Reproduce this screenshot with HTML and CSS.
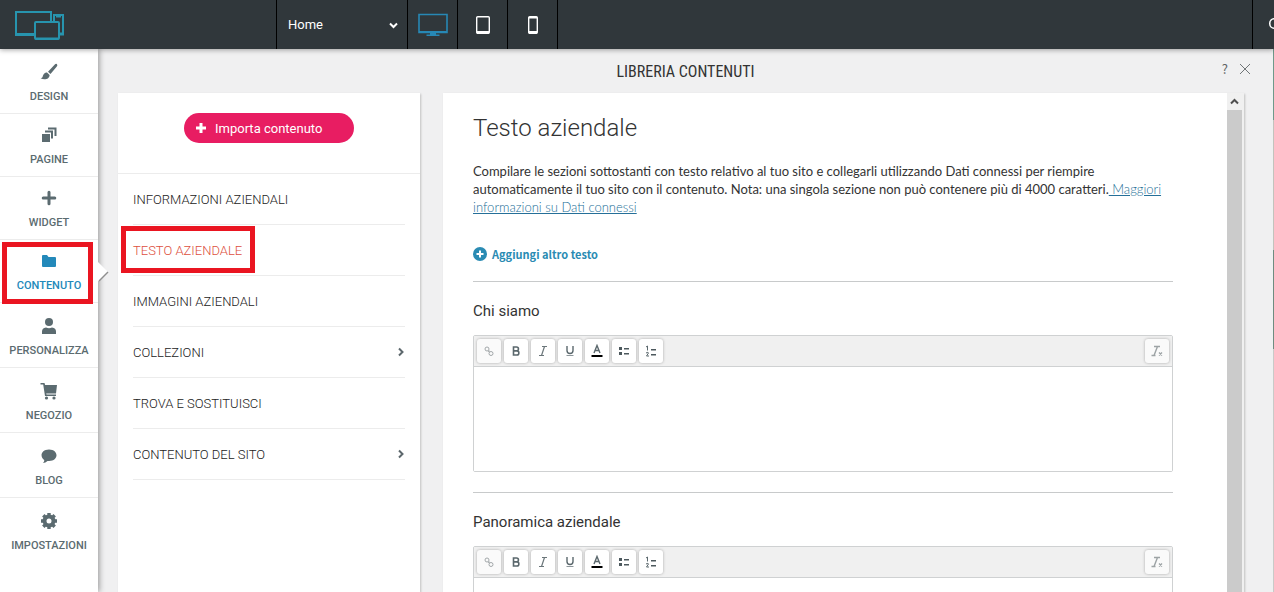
FILE: index.html
```html
<!DOCTYPE html>
<html lang="it">
<head>
<meta charset="utf-8">
<title>Libreria contenuti</title>
<link rel="stylesheet" href="styles.css">
</head>
<body>
<svg class="defs" aria-hidden="true">
  <symbol id="chain" viewBox="0 0 12 12"><g fill="none" stroke="#a3a8aa" stroke-width="1"><circle cx="4" cy="4" r="2"/><circle cx="8" cy="8.500" r="2"/><path d="M5 6.500l2-.5"/></g></symbol>
  <symbol id="bold" viewBox="0 0 12 12"><path d="M3.500 2h3a1.900 1.900 0 0 1 0 3.900h-3zM3.500 5.900h3.300a2 2 0 0 1 0 4.100H3.500z" fill="none" stroke="#5b686d" stroke-width="1.600"/></symbol>
  <symbol id="italic" viewBox="0 0 12 12"><path d="M5 1.500h5M2 10.500h5M7.500 1.500l-3 9" fill="none" stroke="#6b767a" stroke-width="1.200"/></symbol>
  <symbol id="under" viewBox="0 0 12 12"><path d="M3 1v4.500a3 3 0 0 0 6 0V1" fill="none" stroke="#5b686d" stroke-width="1.400"/><path d="M2.500 10.500h7" stroke="#8d969a"/></symbol>
  <symbol id="color" viewBox="0 0 12 14"><path d="M3 9l3-7.500L9 9M4 6.500h4" fill="none" stroke="#5b686d" stroke-width="1.400"/><path d="M.5 12h11" stroke="#000" stroke-width="2"/></symbol>
  <symbol id="bullets" viewBox="0 0 12 12"><path d="M1 2h3v3H1zM1 7h3v3H1zM6 3h5v1.500H6zM6 8h5v1.500H6z" fill="#4c585d"/></symbol>
  <symbol id="numbers" viewBox="0 0 12 12"><path d="M1 2l1.500-1v4.500M1 8q2.500-1.500 2.500 0L1.500 11h2.500" fill="none" stroke="#5b686d"/><path d="M6 4h5v1.500H6zM6 9h5v1.500H6z" fill="#4c585d"/></symbol>
  <symbol id="clear" viewBox="0 0 14 12"><path d="M4 1.500h6M1.500 10.500h4M7.500 1.500l-3.500 9" fill="none" stroke="#9da3a5" stroke-width="1.400"/><path d="M9 7.500l3 3M12 7.500l-3 3" stroke="#9da3a5" stroke-width="1.300"/></symbol>
  <symbol id="next" viewBox="0 0 8 10"><path d="M2 1.500l3.500 3.500L2 8.500" fill="none" stroke="#5c676c" stroke-width="2"/></symbol>
</svg>

<header class="topbar">
  <a class="logo" href="#" aria-label="Pannello">
    <svg width="52" height="32" viewBox="0 0 52 32" fill="none" stroke="#2794ae" stroke-width="2">
      <path d="M20 25H2V3h35v10"/><path d="M1 25.500h19" stroke-width="3"/>
      <path d="M40 13V6h9v19h-4"/><path d="M42 7.500h5" stroke-width="2"/><path d="M45 25h5" stroke-width="3"/>
      <rect x="21" y="13" width="24" height="17" rx="1"/><path d="M21 29.500h24"/>
    </svg>
  </a>
  <div class="page-pick">
    <select class="page-select" aria-label="Pagina"><option>Home</option></select>
    <svg class="page-arrow" width="9" height="7" viewBox="0 0 9 7"><path d="M1 1.500l3.500 3.500L8 1.500" fill="none" stroke="#fff" stroke-width="2"/></svg>
  </div>
  <button class="device" aria-label="Desktop"><svg width="30" height="24" viewBox="0 0 30 24"><path d="M1 1.500h28v18H1z" fill="none" stroke="#2788b5" stroke-width="1.600"/><path d="M1 18h28v2H1zM12 20h6v1.500h3.500V23h-13v-1.500H12z" fill="#2788b5"/></svg></button>
  <button class="device" aria-label="Tablet"><svg width="14" height="18" viewBox="0 0 14 18"><rect x=".7" y=".7" width="12.600" height="16.600" rx="1" fill="none" stroke="#fff" stroke-width="1.400"/><path d="M1 15h12v2.500H1z" fill="#fff"/></svg></button>
  <button class="device" aria-label="Telefono"><svg width="10" height="18" viewBox="0 0 10 18"><rect x=".7" y=".7" width="8.600" height="16.600" rx="1" fill="none" stroke="#fff" stroke-width="1.400"/><path d="M1 1h8v1.500H1zM1 15h8v2.500H1z" fill="#fff"/></svg></button>
  <button class="more" aria-label="Anteprima"><svg width="14" height="14" viewBox="0 0 14 14"><circle cx="7.500" cy="5.500" r="4.800" fill="none" stroke="#fff" stroke-width="1.500"/></svg></button>
</header>

<div class="workspace">
  <nav class="rail">
    <a class="rail-item" href="#"><svg width="18" height="18" viewBox="0 0 18 18"><path d="M16.800 1q1.200 1 0 2.500L10.500 11 8 8.700 14.800 1.500q1-1 2-.5zM7 9.600L9.600 12c0 4-5 5.500-9 3.300 2.400-.3 1.800-2 2.900-3.800C4.500 10 6 9.500 7 9.600z"/></svg>DESIGN</a>
    <a class="rail-item" href="#"><svg width="18" height="18" viewBox="0 0 18 18"><path d="M2 8h8v8H2zM5 4.500h8v8h-2V6.500H5zM8 1.500h8.500V10h-2V3.500H8z"/></svg>PAGINE</a>
    <a class="rail-item" href="#"><svg width="18" height="18" viewBox="0 0 18 18"><path d="M9 3.200v11.600M3.200 9h11.600" stroke="#5b6b70" stroke-width="3" stroke-linecap="round"/></svg>WIDGET</a>
    <a class="rail-item current" href="#"><svg width="18" height="18" viewBox="0 0 18 18"><path d="M3 3h4l1.500 2H15q1 0 1 1v8q0 1-1 1H3q-1 0-1-1V4q0-1 1-1z"/></svg>CONTENUTO<svg class="pointer" width="11" height="22" viewBox="0 0 11 22"><path d="M0 1l10 10-9 9H0z" fill="#fff"/><path d="M10 11l-9 9" stroke="#8f8f8f" stroke-width="1.500"/></svg></a>
    <a class="rail-item tall" href="#"><svg width="18" height="18" viewBox="0 0 18 18"><circle cx="9" cy="5" r="4"/><path d="M2 17v-2.500q0-3.500 4-4 3 1.500 6 0 4 .5 4 4V17z"/></svg>PERSONALIZZA</a>
    <a class="rail-item tall" href="#"><svg width="18" height="18" viewBox="0 0 18 18"><path d="M.5 1h4l.6 2H17l-1 8.500H6.200l.3 1H16V14H5L3.200 2.500H.5z"/><circle cx="6.500" cy="16" r="1.600"/><circle cx="14" cy="16" r="1.600"/></svg>NEGOZIO</a>
    <a class="rail-item tall" href="#"><svg width="18" height="18" viewBox="0 0 18 18"><path d="M9 2.500c10 0 10 11.500 0 11.500H7.500Q5.500 16 3 16q1.500-1.500 1.200-3C-.5 10 1 2.500 9 2.500z"/></svg>BLOG</a>
    <a class="rail-item tall last" href="#"><svg width="18" height="18" viewBox="0 0 18 18"><circle cx="9" cy="9" r="4.500" fill="none" stroke="#5b6b70" stroke-width="4"/><path d="M9 1v3M9 14v3M1 9h3M14 9h3M3.300 3.300l2 2M12.700 12.700l2 2M3.300 14.700l2-2M12.700 5.300l2-2" stroke="#5b6b70" stroke-width="3.400"/></svg>IMPOSTAZIONI</a>
  </nav>

  <main class="library">
    <div class="library-head">
      <h1 class="library-title">LIBRERIA CONTENUTI</h1>
      <div class="head-tools">
        <button class="head-btn" aria-label="Aiuto">?</button>
        <button class="head-btn" aria-label="Chiudi"><svg width="12" height="12" viewBox="0 0 12 12"><path d="M1 1l10 10M11 1L1 11" stroke="#707577"/></svg></button>
      </div>
    </div>
    <div class="panels">
      <aside class="menu-panel">
        <div class="import-box">
          <button class="import-btn"><svg width="10" height="10" viewBox="0 0 10 10"><path d="M5 0v10M0 5h10" stroke="#fff" stroke-width="3"/></svg>Importa contenuto</button>
        </div>
        <nav class="menu">
          <a class="menu-item" href="#">INFORMAZIONI AZIENDALI</a>
          <a class="menu-item chosen" href="#">TESTO AZIENDALE</a>
          <a class="menu-item" href="#">IMMAGINI AZIENDALI</a>
          <a class="menu-item" href="#">COLLEZIONI<svg width="8" height="10"><use href="#next"/></svg></a>
          <a class="menu-item" href="#">TROVA E SOSTITUISCI</a>
          <a class="menu-item" href="#">CONTENUTO DEL SITO<svg width="8" height="10"><use href="#next"/></svg></a>
        </nav>
      </aside>
      <section class="doc-panel">
        <div class="doc">
          <h2 class="doc-title">Testo aziendale</h2>
          <p class="intro">Compilare le sezioni sottostanti con testo relativo al tuo sito e collegarli utilizzando Dati connessi per riempire automaticamente il tuo sito con il contenuto. Nota: una singola sezione non può contenere più di 4000 caratteri.<a class="intro-link" href="#"> Maggiori informazioni su Dati connessi</a></p>
          <button class="add-btn"><svg width="14" height="14" viewBox="0 0 14 14"><circle cx="7" cy="7" r="7" fill="#2a8bb3"/><path d="M7 3.500v7M3.500 7h7" stroke="#fff" stroke-width="2"/></svg>Aggiungi altro testo</button>
          <div class="field">
            <label class="field-label" for="about">Chi siamo</label>
            <div class="editor">
              <div class="tools">
                <button class="tool dim" aria-label="Collegamento"><svg width="12" height="12"><use href="#chain"/></svg></button>
                <button class="tool" aria-label="Grassetto"><svg width="12" height="12"><use href="#bold"/></svg></button>
                <button class="tool" aria-label="Corsivo"><svg width="12" height="12"><use href="#italic"/></svg></button>
                <button class="tool" aria-label="Sottolineato"><svg width="12" height="12"><use href="#under"/></svg></button>
                <button class="tool" aria-label="Colore"><svg width="12" height="14"><use href="#color"/></svg></button>
                <button class="tool" aria-label="Elenco puntato"><svg width="12" height="12"><use href="#bullets"/></svg></button>
                <button class="tool" aria-label="Elenco numerato"><svg width="12" height="12"><use href="#numbers"/></svg></button>
                <button class="tool dim end" aria-label="Rimuovi formato"><svg width="14" height="12"><use href="#clear"/></svg></button>
              </div>
              <textarea class="editor-text" id="about"></textarea>
            </div>
          </div>
          <div class="field">
            <label class="field-label" for="overview">Panoramica aziendale</label>
            <div class="editor">
              <div class="tools">
                <button class="tool dim" aria-label="Collegamento"><svg width="12" height="12"><use href="#chain"/></svg></button>
                <button class="tool" aria-label="Grassetto"><svg width="12" height="12"><use href="#bold"/></svg></button>
                <button class="tool" aria-label="Corsivo"><svg width="12" height="12"><use href="#italic"/></svg></button>
                <button class="tool" aria-label="Sottolineato"><svg width="12" height="12"><use href="#under"/></svg></button>
                <button class="tool" aria-label="Colore"><svg width="12" height="14"><use href="#color"/></svg></button>
                <button class="tool" aria-label="Elenco puntato"><svg width="12" height="12"><use href="#bullets"/></svg></button>
                <button class="tool" aria-label="Elenco numerato"><svg width="12" height="12"><use href="#numbers"/></svg></button>
                <button class="tool dim end" aria-label="Rimuovi formato"><svg width="14" height="12"><use href="#clear"/></svg></button>
              </div>
              <textarea class="editor-text" id="overview"></textarea>
            </div>
          </div>
        </div>
        <div class="scroll">
          <button class="scroll-up" aria-label="Su"><svg width="9" height="7" viewBox="0 0 9 7"><path d="M1 5.500L4.500 2 8 5.500" fill="none" stroke="#4e4e4e" stroke-width="2"/></svg></button>
          <div class="scroll-thumb"></div>
        </div>
      </section>
    </div>
  </main>
  <div class="site-edge"></div>
</div>
</body>
</html>
```
FILE: styles.css
```css
*, *::before, *::after { box-sizing: border-box; }

body {
  margin: 0;
  height: 100vh;
  display: flex;
  flex-direction: column;
  overflow: hidden;
  font-family: Roboto, sans-serif;
  font-size: 13px;
  color: #333;
  background: #f0f0f1;
}

button {
  margin: 0;
  padding: 0;
  border: 0;
  background: none;
  font: inherit;
  color: inherit;
}

a { color: inherit; text-decoration: none; }

svg { display: block; flex: none; }

.defs { position: absolute; width: 0; height: 0; }

/* Top bar */
.topbar {
  flex: none;
  display: flex;
  height: 49px;
  background: #30373b;
  box-shadow: 0 1px 5px rgba(0, 0, 0, 0.35);
  position: relative;
  z-index: 3;
}

.logo {
  display: flex;
  align-items: center;
  width: 276px;
  padding-left: 14px;
}

.page-pick {
  position: relative;
  width: 131px;
  border-left: 1px solid #000;
}

.page-select {
  appearance: none;
  width: 100%;
  height: 100%;
  padding: 0 11px;
  border: 0;
  background: none;
  font: 13px Roboto, sans-serif;
  color: #fff;
}

.page-arrow {
  position: absolute;
  right: 9px;
  top: 22px;
  pointer-events: none;
}

.device {
  display: flex;
  align-items: center;
  justify-content: center;
  width: 50px;
  border-left: 1px solid #000;
}

.device:nth-of-type(3) {
  width: 51px;
  border-right: 1px solid #000;
}

.more {
  width: 22px;
  margin-left: auto;
  padding-left: 14px;
  border-left: 1px solid #000;
  overflow: hidden;
}

/* Left rail */
.workspace {
  flex: 1;
  display: flex;
  min-height: 0;
}

.rail {
  flex: none;
  width: 98px;
  padding-top: 2px;
  background: #fff;
  box-shadow: 1px 0 6px rgba(0, 0, 0, 0.4);
  position: relative;
  z-index: 2;
}

.rail-item {
  display: flex;
  flex-direction: column;
  align-items: center;
  gap: 8px;
  height: 63px;
  padding-top: 12px;
  border-bottom: 1px solid #ececec;
  font-size: 11px;
  font-weight: 500;
  line-height: 16px;
  color: #5b6b70;
  fill: #5b6b70;
  position: relative;
}

.rail-item.tall {
  height: 65px;
  padding-top: 14px;
}

.rail-item.last { border-bottom: 0; }

.rail-item.current {
  color: #2389ba;
  fill: #2389ba;
}

.pointer {
  position: absolute;
  left: 98px;
  top: 21px;
}

.rail-item.current::after {
  content: "";
  position: absolute;
  left: 2px;
  top: 2px;
  width: 91px;
  height: 62px;
  border: 5px solid #ea1521;
  z-index: 1;
}

/* Library */
.library {
  flex: 1;
  display: flex;
  flex-direction: column;
  min-width: 0;
}

.library-head {
  flex: none;
  display: grid;
  grid-template-columns: 1fr auto 1fr;
  align-items: center;
  height: 44px;
}

.library-title {
  grid-column: 2;
  margin: 0;
  font-family: "Roboto Condensed", Roboto, sans-serif;
  font-size: 16px;
  font-weight: 400;
}

.head-tools {
  display: flex;
  align-items: center;
  justify-self: end;
  gap: 11px;
  padding: 0 22px 4px 0;
}

.head-btn {
  font-family: "Noto Sans CJK SC", sans-serif;
  font-size: 13px;
  line-height: 16px;
  color: #606466;
}

.panels {
  flex: 1;
  display: flex;
  gap: 23px;
  min-height: 0;
  padding: 0 29px 0 20px;
}

.menu-panel {
  flex: none;
  width: 302px;
  background: #fff;
  box-shadow: 1px 1px 2px rgba(0, 0, 0, 0.2);
}

.import-box {
  display: flex;
  justify-content: center;
  padding: 20px 0 30px;
  border-bottom: 1px solid #ececec;
}

.import-btn {
  display: flex;
  align-items: center;
  gap: 9px;
  width: 170px;
  height: 30px;
  padding-left: 12px;
  border-radius: 15px;
  background: #e81d62;
  color: #fff;
}

.menu { padding: 0 15px; }

.menu-item {
  display: flex;
  align-items: center;
  justify-content: space-between;
  height: 51px;
  border-bottom: 1px solid #ececec;
  font-weight: 300;
  color: #222;
  position: relative;
}

.menu-item.chosen { color: #dd5040; }

.menu-item.chosen::after {
  content: "";
  position: absolute;
  left: -12px;
  top: 1px;
  width: 134px;
  height: 47px;
  border: 5px solid #ea1521;
}

.doc-panel {
  flex: 1;
  display: flex;
  min-width: 0;
  background: #fff;
  box-shadow: 1px 1px 2px rgba(0, 0, 0, 0.2);
}

.doc {
  flex: 1;
  min-width: 0;
  padding: 19px 54px 0 30px;
  overflow: hidden;
}

.doc-title {
  margin: 0 0 18px;
  font-size: 24px;
  font-weight: 300;
  line-height: 32px;
}

.intro {
  margin: 0 0 28px;
  font-family: Lato, sans-serif;
  font-size: 13px;
  line-height: 18px;
}

.intro-link {
  font-weight: 300;
  color: #256f98;
  text-decoration: underline;
}

.add-btn {
  display: flex;
  align-items: center;
  gap: 5px;
  height: 20px;
  margin-bottom: 17px;
  font-family: "Noto Sans CJK SC", sans-serif;
  font-size: 11px;
  font-weight: 700;
  color: #2a8bb3;
}

.field {
  padding-bottom: 20px;
  border-top: 1px solid #c8cacb;
}

.field-label {
  display: block;
  padding: 19px 0 14px;
  font-size: 15px;
  line-height: 20px;
}

.editor {
  border: 1px solid #cfd1d2;
  border-radius: 2px;
}

.tools {
  display: flex;
  gap: 3px;
  padding: 3px;
  border-bottom: 1px solid #cfd1d2;
  background: #f0f0f0;
}

.tool {
  display: flex;
  align-items: center;
  justify-content: center;
  width: 24px;
  height: 24px;
  border-radius: 3px;
  background: #fff;
  box-shadow: 0 0 3px rgba(0, 0, 0, 0.3);
}

.tool.dim { background: #fafafa; }

.tool.end { margin-left: auto; }

.editor-text {
  display: block;
  width: 100%;
  height: 104px;
  padding: 8px;
  border: 0;
  resize: none;
  font: 13px Roboto, sans-serif;
}

.scroll {
  flex: none;
  display: flex;
  flex-direction: column;
  width: 17px;
  padding-right: 2px;
  background: #f0f0f0;
}

.scroll-up {
  display: flex;
  align-items: center;
  justify-content: center;
  height: 17px;
}

.scroll-thumb {
  flex: 1;
  background: #cbcbcb;
}

/* Sliver of the edited site */
.site-edge {
  flex: none;
  width: 1px;
  background: linear-gradient(#6f998a 71px, #c3c3bd 71px, #c3c3bd 201px, #6f8c80 201px, #6f8c80 300px, #c9cac8 300px);
}
```
